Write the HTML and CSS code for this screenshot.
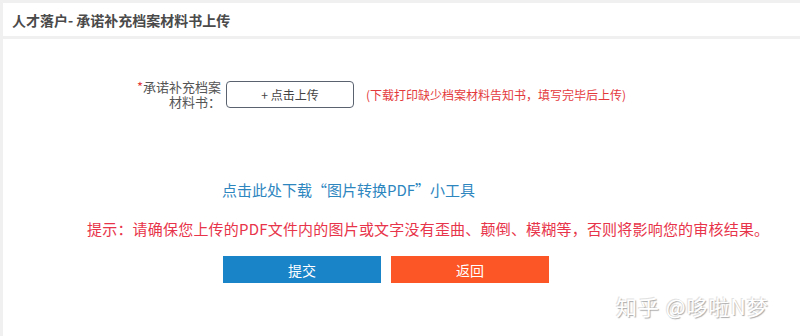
FILE: index.html
```html
<!DOCTYPE html>
<html>
<head>
	<meta charset="utf-8">
	<meta name="viewport" content="width=device-width, initial-scale=1">
	<title>承诺补充档案材料书上传</title>
	<link rel="stylesheet" href="styles.css">
</head>
<body>
<div class="page">

<header class="title-bar">
	人才落户- 承诺补充档案材料书上传
</header>

<main class="panel">
	<div class="upload-row">
		<label class="field-label"><span class="star">*</span>承诺补充档案<br>材料书：</label>
		<button class="upload-btn">+ 点击上传</button>
		<span class="upload-note">(下载打印缺少档案材料告知书，填写完毕后上传)</span>
	</div>

	<p class="tool-link">
		<a href="#">点击此处下载“图片转换PDF”小工具</a>
	</p>

	<p class="tip">提示：请确保您上传的PDF文件内的图片或文字没有歪曲、颠倒、模糊等，否则将影响您的审核结果。</p>

	<div class="actions">
		<button class="btn submit">提交</button>
		<button class="btn back">返回</button>
	</div>
</main>

</div>

<div class="watermark">知乎 @哆啦N梦</div>
</body>
</html>
```

FILE: styles.css
```css
html, *, *::before,
*::after{
	box-sizing: border-box;
}
body{
	margin: 0;
	background: #f0f0f0;
	font-family: "Noto Sans CJK SC", "Liberation Sans", sans-serif;
	color: #333;
	overflow: hidden;
}
.page{
	padding: 3px 0 0 3px;
	height: 336px;
	display: flex;
	flex-direction: column;
	gap: 3px;
}
.title-bar{
	background: #fff;
	height: 33px;
	padding-left: 9px;
	display: flex;
	align-items: center;
	font-size: 14px;
	font-weight: 700;
	color: #4a4a4a;
}
.panel{
	background: #fff;
	flex: 1;
	padding-top: 40px;
}
.upload-row{
	display: flex;
	align-items: center;
	padding-left: 128px;
}
.field-label{
	width: 90px;
	text-align: right;
	font-size: 13px;
	line-height: 15px;
	color: #555;
}
.star{
	color: #e4393c;
}
.upload-btn{
	margin-left: 5px;
	width: 128px;
	height: 27px;
	border: 1px solid #5a6270;
	border-radius: 4px;
	background: #fff;
	color: #444;
	font-family: inherit;
	font-size: 12px;
	cursor: pointer;
}
.upload-note{
	margin-left: 12px;
	font-size: 12px;
	color: #e4393c;
}
.tool-link{
	margin: 70px 0 0;
	padding-left: 219px;
	font-size: 15px;
	line-height: 22px;
}
.tool-link a{
	color: #2e86bf;
	text-decoration: none;
}
.tip{
	margin: 17px 0 0;
	padding-left: 84px;
	font-size: 15px;
	line-height: 22px;
	letter-spacing: 0.2px;
	color: #e8344a;
}
.actions{
	margin-top: 16px;
	padding-left: 220px;
	display: flex;
	gap: 10px;
}
.btn{
	width: 158px;
	height: 27px;
	border: none;
	color: #fff;
	font-family: inherit;
	font-size: 14px;
	cursor: pointer;
}
.submit{
	background: #1a84c9;
}
.back{
	background: #fd5626;
}
.watermark{
	position: absolute;
	left: 616px;
	top: 291px;
	font-size: 21px;
	color: #fff;
	text-shadow: 1px 1px 1px #aaa, -1px -1px 0 #e2e2e2;
	letter-spacing: 1px;
}
```
